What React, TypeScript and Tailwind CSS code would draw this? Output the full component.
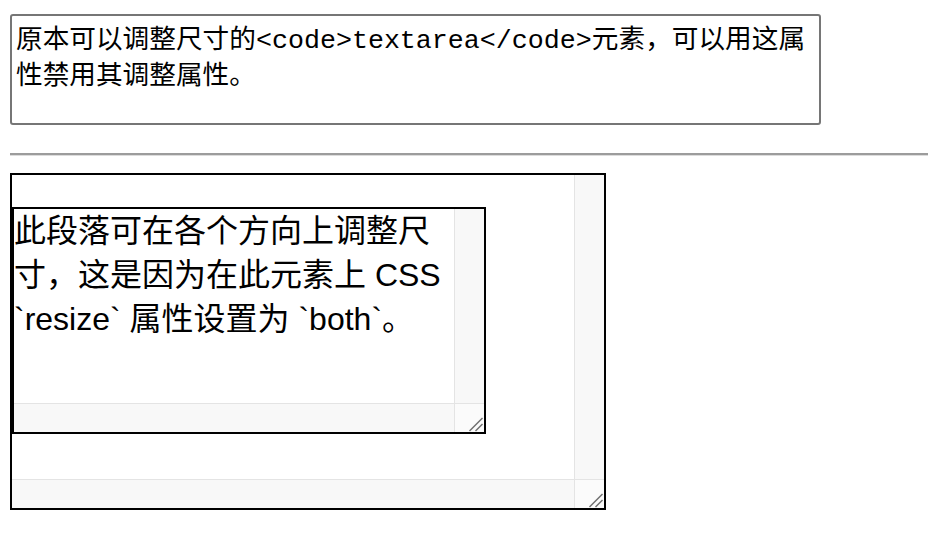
import React from 'react';

const mono = "font-['Liberation_Mono','Noto_Sans_CJK_SC',monospace]";
const sans = "font-['Liberation_Sans','Noto_Sans_CJK_SC',sans-serif]";

const Grip = () => (
  <svg width="16" height="16" viewBox="0 0 16 16" className="block">
    <line x1="1.5" y1="15" x2="14.5" y2="2" stroke="#6e6e6e" strokeWidth="1.4" />
    <line x1="7.5" y1="15" x2="14.5" y2="8" stroke="#6e6e6e" strokeWidth="1.4" />
  </svg>
);

// fake "overflow: scroll" frame: content + both scrollbars + resize corner
const ScrollFrame: React.FC<{ className: string; children?: React.ReactNode }> = ({ className, children }) => (
  <div className={`grid grid-cols-[1fr_30px] grid-rows-[1fr_29px] border-2 border-black bg-white ${className}`}>
    <div className="min-w-0 min-h-0 overflow-hidden">{children}</div>
    <div className="bg-[#f8f8f8] border-l-[1.5px] border-[#e4e4e4]" />
    <div className="bg-[#f8f8f8] border-t-[1.5px] border-[#e4e4e4]" />
    <div className="flex items-end justify-end bg-[#fbfbfb] border-l-[1.5px] border-t-[1.5px] border-[#e4e4e4]">
      <Grip />
    </div>
  </div>
);

export default function App() {
  return (
    <div className="w-[928px] h-[538px] overflow-hidden bg-white text-black">
      <div className="pl-[10px] pt-[14px]">
        <textarea
          readOnly
          className={`block w-[811px] h-[111px] resize-none overflow-hidden rounded-[3px] border-2 border-[#767676] bg-white px-[4px] pt-[7px] pb-[2px] text-[26.67px] leading-[36px] text-black outline-none ${mono}`}
          defaultValue="原本可以调整尺寸的<code>textarea</code>元素，可以用这属性禁用其调整属性。"
        />
        <div className="mt-[28px] h-[3px] border-t-2 border-b border-t-[#9c9c9c] border-b-[#dcdcdc]" />
        <ScrollFrame className={`mt-[17px] w-[596px] h-[337px] ${sans}`}>
          <div className="pt-[32px]">
            <ScrollFrame className="w-[474px] h-[227px]">
              <p className="text-[32px] leading-[44px]">
                此段落可在各个方向上调整尺寸，这是因为在此元素上 CSS `resize` 属性设置为 `both`。
              </p>
            </ScrollFrame>
          </div>
        </ScrollFrame>
      </div>
    </div>
  );
}
